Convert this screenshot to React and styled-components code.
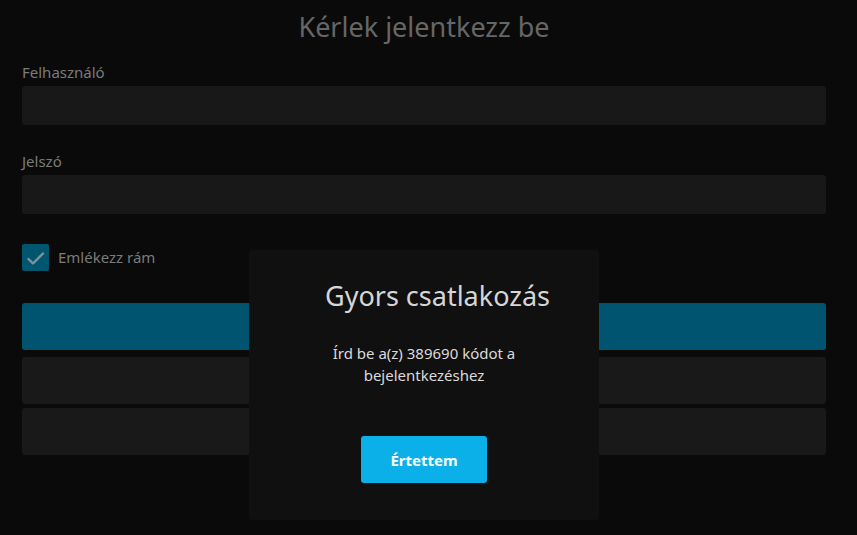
import React from 'react';
import styled, { createGlobalStyle } from 'styled-components';

const GlobalStyle = createGlobalStyle`
  html, body {
    margin: 0;
    padding: 0;
    background: #0a0a0a;
    font-family: 'Noto Sans', 'Open Sans', sans-serif;
  }
  * { box-sizing: border-box; }
`;

const Page = styled.div`
  position: relative;
  width: 857px;
  height: 535px;
  overflow: hidden;
  background: #0a0a0a;
  padding: 0 31px 0 22px;
`;

const Title = styled.h1`
  margin: 0;
  padding-top: 8px;
  height: 56px;
  text-align: center;
  font-size: 27px;
  font-weight: 400;
  line-height: 38px;
  color: #666666;
`;

const Field = styled.div`
  display: flex;
  flex-direction: column;
  margin-bottom: ${p => p.$mb || 0}px;
`;

const Label = styled.label`
  font-size: 15px;
  line-height: 20px;
  height: 30px;
  padding-top: 6px;
  color: #7b7b7b;
`;

const Input = styled.div`
  height: 39px;
  border-radius: 3px;
  background: #181818;
`;

const CheckRow = styled.div`
  display: flex;
  align-items: center;
  gap: 9px;
  margin-top: 29px;
  height: 28px;
`;

const Check = styled.span`
  display: flex;
  width: 27px;
  height: 27px;
  border-radius: 2px;
  background: #00566f;
`;

const CheckText = styled.span`
  font-size: 15px;
  color: #7b7b7b;
`;

const Buttons = styled.div`
  display: flex;
  flex-direction: column;
  margin-top: 32px;
`;

const Block = styled.div`
  height: 47px;
  border-radius: 3px;
  background: ${p => (p.$primary ? '#00546f' : '#191919')};
  margin-bottom: ${p => p.$mb || 0}px;
`;

const Dialog = styled.div`
  position: absolute;
  left: 249px;
  top: 250px;
  width: 350px;
  height: 270px;
  border-radius: 3px;
  background: #101010;
  display: flex;
  flex-direction: column;
  align-items: center;
`;

const DialogTitle = styled.h2`
  margin: 27px 0 0 27px;
  font-size: 27px;
  font-weight: 400;
  line-height: 38px;
  color: #d6d6d6;
`;

const DialogText = styled.p`
  margin: 27px 0 0;
  width: 200px;
  text-align: center;
  font-size: 15px;
  line-height: 22px;
  color: #dadada;
`;

const OkButton = styled.button`
  margin-top: 50px;
  width: 126px;
  height: 47px;
  border: 0;
  border-radius: 3px;
  background: #0cb0e8;
  color: #ffffff;
  font-family: inherit;
  font-size: 15px;
  font-weight: 700;
`;

const CheckIcon = () => (
  <svg width="27" height="27" viewBox="0 0 27 27" fill="none" stroke="#7f939b" strokeWidth="2.4" strokeLinecap="round" strokeLinejoin="round">
    <path d="M6.5 15l4.5 4.5L21 9.5" />
  </svg>
);

export default function App() {
  return (
    <>
      <GlobalStyle />
      <Page>
        <Title>Kérlek jelentkezz be</Title>
        <Field $mb={20}>
          <Label>Felhasználó</Label>
          <Input />
        </Field>
        <Field>
          <Label>Jelszó</Label>
          <Input />
        </Field>
        <CheckRow>
          <Check><CheckIcon /></Check>
          <CheckText>Emlékezz rám</CheckText>
        </CheckRow>
        <Buttons>
          <Block $primary $mb={7} />
          <Block $mb={4} />
          <Block />
        </Buttons>
        <Dialog>
          <DialogTitle>Gyors csatlakozás</DialogTitle>
          <DialogText>Írd be a(z) 389690 kódot a bejelentkezéshez</DialogText>
          <OkButton>Értettem</OkButton>
        </Dialog>
      </Page>
    </>
  );
}
